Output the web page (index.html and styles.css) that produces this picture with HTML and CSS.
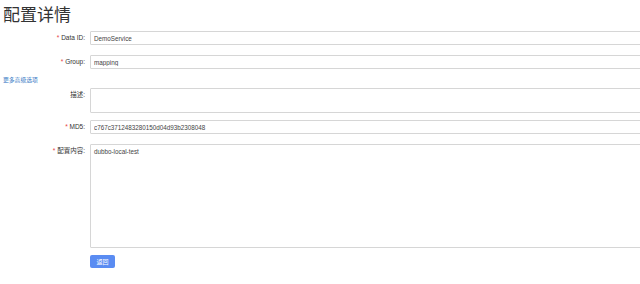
FILE: index.html
```html
<!DOCTYPE html>
<html lang="zh-CN">
  <head>
    <meta charset="UTF-8" />
    <meta name="viewport" content="width=device-width, initial-scale=1.0" />
    <title>配置详情</title>
    <link rel="stylesheet" href="styles.css">
  </head>
  <body>
    <h1 class="page-title">配置详情</h1>

    <form class="config-form">
      <div class="form-row">
        <label class="form-label required">Data ID:</label>
        <input class="form-input" type="text" value="DemoService" readonly />
      </div>

      <div class="form-row">
        <label class="form-label required">Group:</label>
        <input class="form-input" type="text" value="mapping" readonly />
      </div>

      <a class="more-link" href="#">更多高级选项</a>

      <div class="form-row row-desc">
        <label class="form-label">描述:</label>
        <textarea class="form-input form-textarea desc" readonly></textarea>
      </div>

      <div class="form-row">
        <label class="form-label required">MD5:</label>
        <input class="form-input" type="text" value="c767c3712483280150d04d93b2308048" readonly />
      </div>

      <div class="form-row row-content">
        <label class="form-label required">配置内容:</label>
        <textarea class="form-input form-textarea content" readonly>dubbo-local-test</textarea>
      </div>

      <div class="form-actions">
        <button class="btn" type="button">返回</button>
      </div>
    </form>
  </body>
</html>
```

FILE: styles.css
```css
body {
  margin: 0;
  padding: 6px 0 0 3px;
  font-family: "Liberation Sans", "Noto Sans CJK SC", sans-serif;
  color: #333;
  background: #fff;
  overflow: hidden;
}

.page-title {
  margin: 0 0 5px 0;
  font-size: 17px;
  font-weight: 400;
  line-height: 20px;
  color: #333;
}

.config-form {
  width: 700px;
}

.form-row {
  display: flex;
  align-items: flex-start;
  gap: 5px;
  margin-bottom: 10px;
}

.form-row.row-desc {
  margin-bottom: 7px;
}

.form-row.row-content {
  margin-bottom: 7px;
}

.form-label {
  width: 82px;
  flex-shrink: 0;
  text-align: right;
  font-size: 6.5px;
  line-height: 14px;
  color: #333;
}

.form-label.required::before {
  content: "* ";
  color: #e64242;
}

.form-input {
  flex: 1;
  box-sizing: border-box;
  height: 14px;
  padding: 0 3px;
  border: 1px solid #d6d6d6;
  border-radius: 1px;
  font-family: inherit;
  font-size: 6.3px;
  color: #444;
  background: #fff;
  outline: none;
}

.form-textarea {
  resize: none;
  padding: 3px 3px;
  line-height: 8px;
}

.form-textarea.desc {
  height: 25px;
}

.form-textarea.content {
  height: 104px;
}

.more-link {
  display: block;
  margin: -3px 0 3px 0;
  font-size: 5.8px;
  line-height: 9px;
  color: #3a7cc6;
  text-decoration: none;
}

.form-actions {
  display: flex;
  padding-left: 87px;
}

.btn {
  width: 25px;
  height: 13px;
  padding: 0;
  border: none;
  border-radius: 2px;
  background: #5a8cf2;
  color: #fff;
  font-family: inherit;
  font-size: 6px;
  cursor: pointer;
}
```
